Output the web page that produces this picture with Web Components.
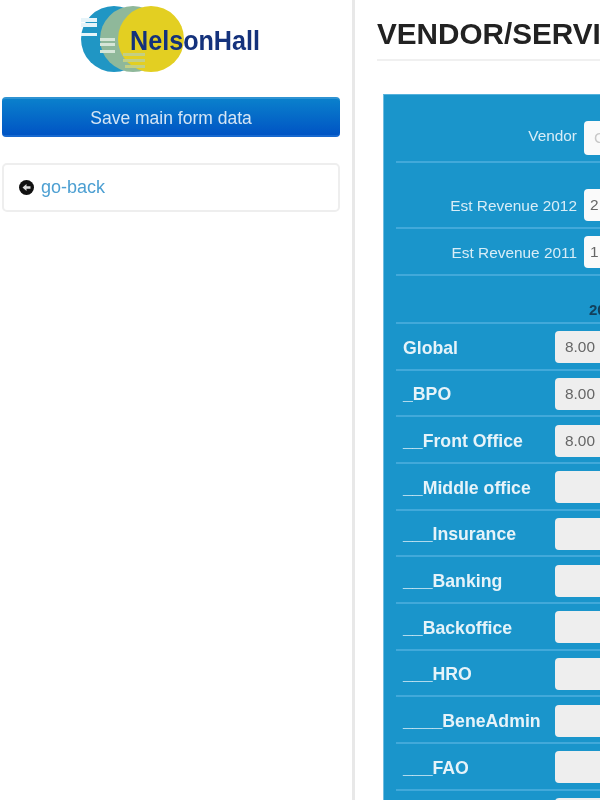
<!DOCTYPE html>
<html>
<head>
<meta charset="utf-8">
<style>
  html, body { margin: 0; height: 800px; overflow: hidden; background: #fff; }
  body { font-family: "Liberation Sans", Arial, sans-serif; }
</style>
</head>
<body>
<app-page>
  <side-bar slot="side">
    <nh-logo></nh-logo>
    <save-button>Save main form data</save-button>
    <back-card>go-back</back-card>
  </side-bar>
  <main-area slot="main" heading="VENDOR/SERVICE PROVIDER">
    <form-panel>
      <top-row label="Vendor" height="68" field-h="34" lift="4" value="G" dim></top-row>
      <top-row label="Est Revenue 2012" height="66" field-h="32" lift="0" value="2"></top-row>
      <top-row label="Est Revenue 2011" height="47" field-h="32" lift="0" value="1"></top-row>
      <head-row>2012</head-row>
      <data-row value="8.00">Global</data-row>
      <data-row value="8.00">_BPO</data-row>
      <data-row value="8.00">__Front Office</data-row>
      <data-row>__Middle office</data-row>
      <data-row>___Insurance</data-row>
      <data-row>___Banking</data-row>
      <data-row>__Backoffice</data-row>
      <data-row>___HRO</data-row>
      <data-row>____BeneAdmin</data-row>
      <data-row>___FAO</data-row>
      <data-row></data-row>
    </form-panel>
  </main-area>
</app-page>

<script>
class appPage extends HTMLElement {
  constructor() {
    super();
    this.attachShadow({ mode: "open" }).innerHTML = /* html */ `
      <style>
        /* the reference is a soft, upscaled capture */
        :host { display: grid; grid-template-columns: 352px 248px; height: 800px; overflow: hidden; filter: blur(0.6px); }
      </style>
      <slot name="side"></slot>
      <slot name="main"></slot>`;
  }
}

class sideBar extends HTMLElement {
  constructor() {
    super();
    this.attachShadow({ mode: "open" }).innerHTML = /* html */ `
      <style>
        :host { display: flex; flex-direction: column; padding: 0 12px 0 2px; }
      </style>
      <slot></slot>`;
  }
}

class nhLogo extends HTMLElement {
  constructor() {
    super();
    this.attachShadow({ mode: "open" }).innerHTML = /* html */ `
      <style>
        :host { display: block; height: 97px; }
        svg { display: block; margin-left: -2px; }
        text { font: bold 28px "Liberation Sans", Arial, sans-serif; fill: #14327c; }
      </style>
      <svg width="300" height="80" viewBox="0 0 300 80">
        <circle cx="114" cy="39" r="33" fill="#2096c4"/>
        <circle cx="133" cy="39" r="33" fill="#8fb89a"/>
        <circle cx="151" cy="39" r="33" fill="#e3cf22"/>
        <path d="M81 18h16v4H81zM81 23h16v4H81zM81 33h16v3H81z" fill="#e6f4f9"/>
        <path d="M100 38h15v3h-15zM100 43h15v3h-15zM100 50h15v3h-15z" fill="#d6e6d8"/>
        <path d="M123 53h22v3h-22zM123 59h22v3h-22zM125 65h20v3h-20z" fill="#c3cf84"/>
        <text x="130" y="50" textLength="130" lengthAdjust="spacingAndGlyphs">NelsonHall</text>
      </svg>`;
  }
}

class saveButton extends HTMLElement {
  constructor() {
    super();
    this.attachShadow({ mode: "open" }).innerHTML = /* html */ `
      <style>
        :host {
          display: flex; align-items: center; justify-content: center;
          height: 40px; box-sizing: border-box; border-radius: 4px; padding-top: 2px;
          background: linear-gradient(#0a80cc, #0054c4);
          border-top: 2px solid #2f93d2; border-bottom: 2px solid #1668cf;
          color: #d6e6f5; font-size: 17.5px;
        }
      </style>
      <slot></slot>`;
  }
}

class backCard extends HTMLElement {
  constructor() {
    super();
    this.attachShadow({ mode: "open" }).innerHTML = /* html */ `
      <style>
        :host {
          display: flex; align-items: center; gap: 7px;
          margin-top: 26px; height: 49px; box-sizing: border-box; padding-left: 15px;
          border: 2px solid #eeeeee; border-radius: 5px;
          color: #4c9fd2; font-size: 18px;
        }
        svg { display: block; }
      </style>
      <svg width="15" height="15" viewBox="0 0 15 15">
        <circle cx="7.5" cy="7.5" r="7.5" fill="#111"/>
        <path d="M3.5 7.5 7.5 4v2.2h4v2.6h-4V11z" fill="#ddd"/>
      </svg>
      <slot></slot>`;
  }
}

class mainArea extends HTMLElement {
  constructor() {
    super();
    this.attachShadow({ mode: "open" }).innerHTML = /* html */ `
      <style>
        :host {
          display: block; overflow: hidden; height: 800px; box-sizing: border-box;
          border-left: 3px solid #e8e8e8; padding-left: 22px; color: #222;
        }
        h1 {
          margin: 0; height: 61px; box-sizing: border-box; width: 600px; padding-top: 19px;
          border-bottom: 2px solid #f0f0f0;
          font-size: 29.7px; line-height: 30px; white-space: nowrap;
        }
      </style>
      <h1></h1>
      <slot></slot>`;
    this.shadowRoot.querySelector("h1").textContent = this.getAttribute("heading");
  }
}

class formPanel extends HTMLElement {
  constructor() {
    super();
    this.attachShadow({ mode: "open" }).innerHTML = /* html */ `
      <style>
        :host {
          display: block; margin: 33px 0 0 6px; width: 500px;
          padding: 0 0 0 12px; background: #1a95cb;
          border-top: 1px solid #55b2dc; border-left: 1px solid #6fbde0;
        }
      </style>
      <slot></slot>`;
  }
}

const FIELD_CSS = /* css */ `
  .field {
    box-sizing: border-box; width: 120px; height: 32px; padding-left: 10px;
    border-radius: 4px; background: #fff; color: #666;
    display: flex; align-items: center;
    font: 15.4px "Liberation Sans", Arial, sans-serif;
  }
`;

class topRow extends HTMLElement {
  constructor() {
    super();
    const h = this.getAttribute("height");
    const fieldH = this.getAttribute("field-h");
    const lift = this.getAttribute("lift");
    this.attachShadow({ mode: "open" }).innerHTML = /* html */ `
      <style>
        ${FIELD_CSS}
        :host {
          display: grid; grid-template-columns: 181px 1fr; column-gap: 7px;
          align-items: end; box-sizing: border-box; height: ${h}px;
          padding-bottom: 6px; border-bottom: 2px solid #42a9da;
          color: #d8edf7; font-size: 15.4px;
        }
        label { text-align: right; line-height: 30px; padding-bottom: ${lift}px; }
        .field { background: #fafafa; height: ${fieldH}px; padding-left: ${this.hasAttribute("dim") ? 10 : 6}px; }
        :host([dim]) .field { color: #c8c8c8; }
      </style>
      <label></label>
      <div class="field"></div>`;
    this.shadowRoot.querySelector("label").textContent = this.getAttribute("label");
    this.shadowRoot.querySelector(".field").textContent = this.getAttribute("value");
  }
}

class headRow extends HTMLElement {
  constructor() {
    super();
    this.attachShadow({ mode: "open" }).innerHTML = /* html */ `
      <style>
        :host {
          display: block; box-sizing: border-box; height: 48px;
          padding: 25px 0 0 193px; border-bottom: 2px solid #42a9da;
          color: #12405c; font: bold 15px/18px "Liberation Sans", Arial, sans-serif;
        }
      </style>
      <slot></slot>`;
  }
}

class dataRow extends HTMLElement {
  constructor() {
    super();
    this.attachShadow({ mode: "open" }).innerHTML = /* html */ `
      <style>
        ${FIELD_CSS}
        :host {
          display: grid; grid-template-columns: 152px 1fr; align-items: center;
          box-sizing: border-box; height: 46.67px; padding: 7px 0 5px 7px;
          border-bottom: 2px solid #42a9da;
          color: #e6f3f9; font: bold 17.7px "Liberation Sans", Arial, sans-serif;
          white-space: nowrap;
        }
        .label { padding-top: 2px; }
        .field { background: #eeeeee; }
      </style>
      <div class="label"><slot></slot></div>
      <div class="field"></div>`;
    this.shadowRoot.querySelector(".field").textContent = this.getAttribute("value") || "";
  }
}

customElements.define("app-page", appPage);
customElements.define("side-bar", sideBar);
customElements.define("nh-logo", nhLogo);
customElements.define("save-button", saveButton);
customElements.define("back-card", backCard);
customElements.define("main-area", mainArea);
customElements.define("form-panel", formPanel);
customElements.define("top-row", topRow);
customElements.define("head-row", headRow);
customElements.define("data-row", dataRow);
</script>
</body>
</html>
